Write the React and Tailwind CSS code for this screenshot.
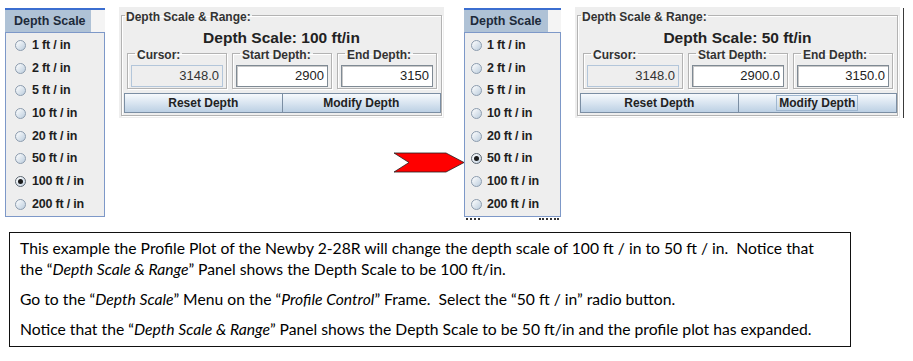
import React from "react";

const SCALES = [
  "1 ft / in",
  "2 ft / in",
  "5 ft / in",
  "10 ft / in",
  "20 ft / in",
  "50 ft / in",
  "100 ft / in",
  "200 ft / in",
];

const uiFont = { fontFamily: '"Liberation Sans", Arial, sans-serif' };

function Radio({ checked }) {
  return (
    <span
      className={
        checked
          ? "flex h-[11px] w-[11px] shrink-0 items-center justify-center rounded-full border border-[#5c6670] bg-gradient-to-br from-[#ffffff] to-[#c4d3e2]"
          : "flex h-[11px] w-[11px] shrink-0 items-center justify-center rounded-full border border-[#8c9cae] bg-gradient-to-br from-[#ffffff] to-[#bccddd]"
      }
    >
      {checked && <span className="h-[5px] w-[5px] rounded-full bg-[#1a1a1a]" />}
    </span>
  );
}

function ScaleMenu({ selected, wrapClass, headClass, itemClass, children }) {
  return (
    <div className={"relative mt-[8px] shrink-0 " + wrapClass} style={uiFont}>
      <div className="h-[2px] bg-[#3b6ed0]" />
      <div className="flex h-[22px]">
        <div
          className={
            "flex items-center bg-[#afc2d6] text-[12.5px] font-bold text-[#1d2a3a] " +
            headClass
          }
        >
          Depth Scale
        </div>
        <div className="flex-1 bg-[#f4f4f4]" />
      </div>
      <div className="border border-[#7d98c8] bg-[#eeeeee] pt-[1px]">
        {SCALES.map((s) => (
          <div
            key={s}
            className={"flex h-[22.7px] items-center text-[12.5px] font-bold text-[#1e1e1e] " + itemClass}
          >
            <Radio checked={s === selected} />
            <span className="tracking-[-0.2px]">{s}</span>
          </div>
        ))}
      </div>
      {children}
    </div>
  );
}

function SubBox({ label, value, editable }) {
  return (
    <fieldset className="w-[100px] border border-[#b3b3b3] px-[3px] pb-[1px] shadow-[1px_1px_0_#ffffff,inset_1px_1px_0_#ffffff]">
      <legend className="relative top-[2px] ml-[4px] px-[2px] text-[12px] font-bold leading-[14px] text-[#333]">
        {label}
      </legend>
      <div
        className={
          editable
            ? "mt-[5px] flex h-[22px] items-center justify-end border border-[#7f8a94] bg-white pr-[3px] text-[13px] text-[#222] shadow-[inset_1px_1px_0_#c8c8c8]"
            : "mt-[5px] flex h-[22px] items-center justify-end border border-[#b3c6da] bg-[#eeeeee] pr-[3px] text-[13px] text-[#333]"
        }
      >
        {value}
      </div>
    </fieldset>
  );
}

function RangePanel({ scale, start, end, focusModify, wrapClass }) {
  return (
    <div
      className={"mt-[7px] h-[111px] w-[325px] shrink-0 bg-[#eeeeee] pl-[2px] pr-[2px] " + wrapClass}
      style={uiFont}
    >
      <fieldset className="mt-[1px] border border-[#b3b3b3] pb-[2px] shadow-[1px_1px_0_#ffffff,inset_1px_1px_0_#ffffff]">
        <legend className="relative top-[2px] ml-[3px] px-[1px] text-[12px] font-bold leading-[14px] text-[#333]">
          Depth Scale &amp; Range:
        </legend>
        <div className="mt-[7px] flex h-[17px] items-center justify-center text-[15.5px] font-bold text-[#222]">
          Depth Scale: {scale}
        </div>
        <div className="ml-[5px] flex gap-[5px]">
          <SubBox label="Cursor:" value="3148.0" />
          <SubBox label="Start Depth:" value={start} editable />
          <SubBox label="End Depth:" value={end} editable />
        </div>
        <div className="mt-[4px] flex pl-[2px]">
          <button className="flex h-[20px] w-1/2 items-center justify-center border border-[#7b8ea3] bg-gradient-to-b from-[#f7fafd] to-[#bcd0e4] text-[12px] font-bold text-[#222]">
            Reset Depth
          </button>
          <button className="flex h-[20px] w-1/2 items-center justify-center border border-l-0 border-[#7b8ea3] bg-gradient-to-b from-[#f7fafd] to-[#bcd0e4] text-[12px] font-bold text-[#222]">
            <span
              className={
                focusModify
                  ? "border border-[#9fb7d0] px-[2px] leading-[14px]"
                  : "px-[2px] leading-[14px]"
              }
            >
              Modify Depth
            </span>
          </button>
        </div>
      </fieldset>
    </div>
  );
}

function Arrow() {
  return (
    <svg
      className="absolute left-[-71px] top-[144px]"
      width="73"
      height="22"
      viewBox="0 0 73 22"
    >
      <polygon
        points="1,1 53,1 71,10.5 53,20 1,20 16,10.5"
        fill="#ff0000"
        stroke="#222"
        strokeWidth="0.8"
      />
    </svg>
  );
}

export default function App() {
  return (
    <div className="h-[361px] w-[913px] overflow-hidden bg-white">
      <div className="flex items-start">
        <ScaleMenu
          selected="100 ft / in"
          wrapClass="ml-[5px] w-[100px]"
          headClass="w-[86px] pl-[9px]"
          itemClass="pl-[9px] gap-[6px]"
        />
        <RangePanel
          scale="100 ft/in"
          start="2900"
          end="3150"
          wrapClass="ml-[14px]"
        />
        <ScaleMenu
          selected="50 ft / in"
          wrapClass="ml-[20px] w-[97px]"
          headClass="w-[84px] pl-[6px]"
          itemClass="pl-[6px] gap-[5px]"
        >
          <Arrow />
          <div className="flex h-[3px] justify-between px-[2px]">
            <span className="w-[14px] border-b-2 border-dotted border-[#333]" />
            <span className="w-[20px] border-b-2 border-dotted border-[#333]" />
          </div>
        </ScaleMenu>
        <RangePanel
          scale="50 ft/in"
          start="2900.0"
          end="3150.0"
          focusModify
          wrapClass="ml-[14px]"
        />
        <div className="ml-[3px] mt-[8px] h-[110px] w-[1px] bg-[#3a3a3a]" />
      </div>

      <div
        className="ml-[9px] mt-[12px] h-[115px] w-[842px] border border-[#111] pl-[10px] pt-[5px] text-[15.7px] leading-[21px] text-black"
        style={{ fontFamily: 'Lato, "Open Sans", sans-serif' }}
      >
        <p className="whitespace-nowrap">
          This example the Profile Plot of the Newby 2-28R will change the depth scale of 100 ft / in to 50 ft / in.{"\u00a0 "}Notice that
          <br />
          the “<i>Depth Scale &amp; Range</i>” Panel shows the Depth Scale to be 100 ft/in.
        </p>
        <p className="mt-[9px] whitespace-nowrap">
          Go to the “<i>Depth Scale</i>” Menu on the “<i>Profile Control</i>” Frame.{"\u00a0 "}Select the “50 ft / in” radio button.
        </p>
        <p className="mt-[9px] whitespace-nowrap">
          Notice that the “<i>Depth Scale &amp; Range</i>” Panel shows the Depth Scale to be 50 ft/in and the profile plot has expanded.
        </p>
      </div>
    </div>
  );
}
